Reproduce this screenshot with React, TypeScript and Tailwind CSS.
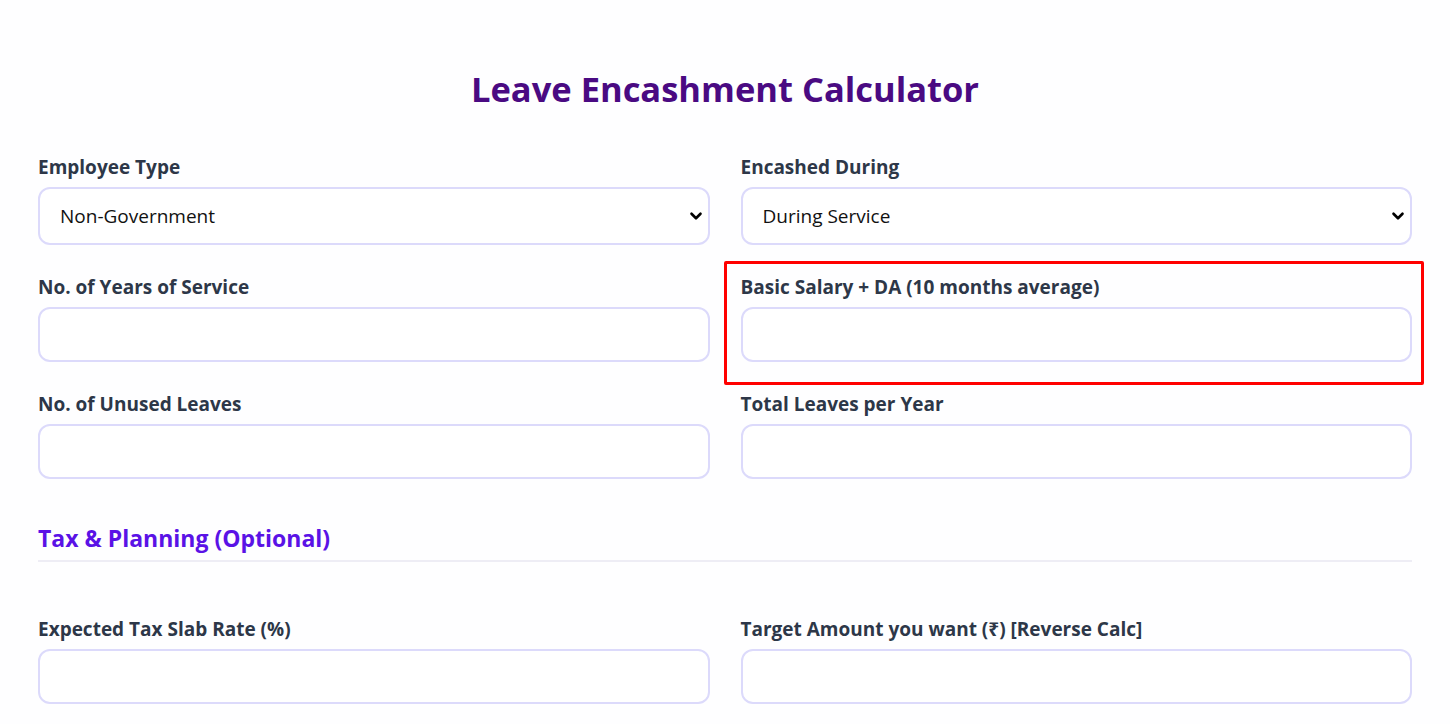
import { ChevronDown } from "lucide-react";

const font = { fontFamily: '"Open Sans", "Noto Sans", sans-serif' };

const Label = ({ children }: { children: React.ReactNode }) => (
  <label className="mb-[9px] block text-[19px] font-bold leading-[22px] text-[#2d3748]">{children}</label>
);

const SelectField = ({ label, value }: { label: string; value: string }) => (
  <div>
    <Label>{label}</Label>
    <div className="relative">
      <select
        defaultValue={value}
        className="h-[58px] w-full appearance-none rounded-[12px] border-2 border-[#dcdafb] bg-white pl-[20px] text-[19px] text-[#111111] outline-none"
      >
        <option>{value}</option>
      </select>
      <ChevronDown
        className="pointer-events-none absolute right-[5px] top-1/2 h-[18px] w-[18px] -translate-y-1/2 text-black"
        strokeWidth={3.5}
      />
    </div>
  </div>
);

const InputField = ({ label }: { label: string }) => (
  <div>
    <Label>{label}</Label>
    <input className="h-[55px] w-full rounded-[12px] border-2 border-[#dcdafb] bg-white px-[20px] text-[19px] outline-none" />
  </div>
);

export default function App() {
  return (
    <div className="min-h-[724px] bg-[#fefeff] pl-[38px] pr-[38px] pt-[68px]" style={font}>
      <h1 className="text-center text-[34.5px] font-bold leading-[42px] text-[#4a0a82]">Leave Encashment Calculator</h1>

      <div className="mt-[46px] grid grid-cols-2 gap-x-[31px] gap-y-[31px]">
        <SelectField label="Employee Type" value="Non-Government" />
        <SelectField label="Encashed During" value="During Service" />
        <InputField label="No. of Years of Service" />
        <div className="relative">
          <InputField label="Basic Salary + DA (10 months average)" />
          <div className="pointer-events-none absolute -bottom-[23px] -left-[17px] -right-[12px] -top-[15px] rounded-[2px] border-[3px] border-[#ff0000]" />
        </div>
        <InputField label="No. of Unused Leaves" />
        <InputField label="Total Leaves per Year" />
      </div>

      <div className="mt-[45px] border-b-2 border-[#eeedf5] pb-[8px]">
        <h2 className="text-[23px] font-bold leading-[28px] text-[#5a12e6]">Tax &amp; Planning (Optional)</h2>
      </div>

      <div className="mt-[56px] grid grid-cols-2 gap-x-[31px]">
        <InputField label="Expected Tax Slab Rate (%)" />
        <InputField label="Target Amount you want (₹) [Reverse Calc]" />
      </div>
    </div>
  );
}
